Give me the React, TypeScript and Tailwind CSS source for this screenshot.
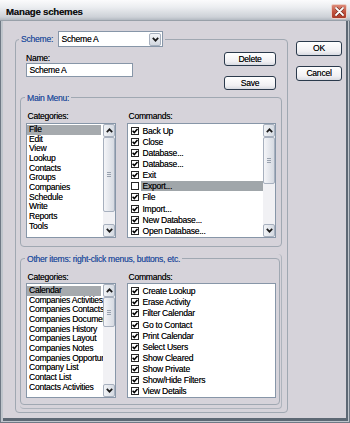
import React from "react";

function Chevron({ up }: { up?: boolean }) {
  return (
    <svg width="7" height="5" viewBox="0 0 7 5">
      <path d={up ? "M0.8 4.2 L3.5 1.3 L6.2 4.2" : "M0.8 0.8 L3.5 3.7 L6.2 0.8"} stroke="#1a1a1a" strokeWidth="1.7" fill="none" />
    </svg>
  );
}

function ArrowBtn({ up, cls }: { up?: boolean; cls: string }) {
  return (
    <div className={`${cls} w-full shrink-0 rounded-[2px] border border-[#a7b0be] bg-[linear-gradient(to_right,#f1f3f6,#d5dae2)] flex items-center justify-center`}>
      <Chevron up={up} />
    </div>
  );
}

function Thumb({ cls }: { cls: string }) {
  return (
    <div className={`${cls} w-full shrink-0 rounded-[2px] border border-[#a7b0be] bg-[linear-gradient(to_right,#f4f5f8,#d6dae2)] flex flex-col items-center justify-center gap-[1px]`}>
      <div className="w-[4px] h-[1px] bg-[#98a1ae]" />
      <div className="w-[4px] h-[1px] bg-[#98a1ae]" />
      <div className="w-[4px] h-[1px] bg-[#98a1ae]" />
    </div>
  );
}

function ScrollBar({ thumbCls }: { thumbCls: string }) {
  return (
    <div className="w-[12px] shrink-0 h-full flex flex-col bg-[#f1f1f4]">
      <ArrowBtn up cls="h-[13px]" />
      <Thumb cls={thumbCls} />
      <div className="flex-1" />
      <ArrowBtn cls="h-[13px]" />
    </div>
  );
}

function Check({ checked }: { checked: boolean }) {
  return (
    <span className="w-[8px] h-[8px] border border-[#262626] bg-white flex items-center justify-center shrink-0">
      {checked && (
        <svg width="6" height="6" viewBox="0 0 6 6">
          <path d="M0.6 2.8 L2.3 4.6 L5.5 0.9" stroke="#000" strokeWidth="1.6" fill="none" />
        </svg>
      )}
    </span>
  );
}

function CatList({ items, selected, ptCls, hCls, thumbCls }: { items: string[]; selected: number; ptCls: string; hCls: string; thumbCls: string }) {
  return (
    <div className={`${hCls} w-[90px] border border-[#8796a8] bg-white flex`}>
      <div className={`${ptCls} flex-1 overflow-hidden pr-[2px]`}>
        {items.map((t, i) => (
          <div key={i} className={`h-[9.66px] leading-[9.66px] pl-[2px] whitespace-nowrap ${i === selected ? "bg-[#a6aaae]" : ""}`}>
            {t}
          </div>
        ))}
      </div>
      <ScrollBar thumbCls={thumbCls} />
    </div>
  );
}

function CmdList({ items, ptCls, hCls, scroll }: { items: [string, boolean, boolean][]; ptCls: string; hCls: string; scroll: boolean }) {
  return (
    <div className={`${hCls} w-[149px] border border-[#8796a8] bg-white flex`}>
      <div className={`${ptCls} flex-1 overflow-hidden`}>
        {items.map(([t, c, hl], i) => (
          <div key={i} className="h-[11.14px] flex items-center pl-[3px]">
            <Check checked={c} />
            <span className={`ml-[1.5px] pl-[2px] flex-1 h-[10px] leading-[10px] whitespace-nowrap ${hl ? "bg-[#a0a6aa]" : ""}`}>{t}</span>
          </div>
        ))}
      </div>
      {scroll && <ScrollBar thumbCls="h-[47px]" />}
    </div>
  );
}

function Btn({ label, cls }: { label: string; cls: string }) {
  return (
    <div className={`${cls} rounded-[3px] border border-[#2b3a4c] bg-[linear-gradient(to_bottom,#ffffff,#f1f0f3_70%,#d9dbe2)] flex items-center justify-center leading-[10px]`}>
      {label}
    </div>
  );
}

const blue = "text-[#2456b6]";

export default function App() {
  const mainCats = ["File", "Edit", "View", "Lookup", "Contacts", "Groups", "Companies", "Schedule", "Write", "Reports", "Tools"];
  const mainCmds: [string, boolean, boolean][] = [
    ["Back Up", true, false],
    ["Close", true, false],
    ["Database...", true, false],
    ["Database...", true, false],
    ["Exit", true, false],
    ["Export...", false, true],
    ["File", true, false],
    ["Import...", true, false],
    ["New Database...", true, false],
    ["Open Database...", true, false],
  ];
  const otherCats = [
    "Calendar",
    "Companies Activities",
    "Companies Contacts",
    "Companies Documents",
    "Companies History",
    "Companies Layout",
    "Companies Notes",
    "Companies Opportunities",
    "Company List",
    "Contact List",
    "Contacts Activities",
  ];
  const otherCmds: [string, boolean, boolean][] = [
    "Create Lookup",
    "Erase Activity",
    "Filter Calendar",
    "Go to Contact",
    "Print Calendar",
    "Select Users",
    "Show Cleared",
    "Show Private",
    "Show/Hide Filters",
    "View Details",
  ].map((t) => [t, true, false]);

  return (
    <div className="w-[350px] h-[423px] flex flex-col bg-[#6f7985] overflow-hidden font-['Liberation_Sans',Arial,sans-serif] text-[8.6px] tracking-[-0.27px] text-black [text-shadow:0_0_0.35px_rgba(0,0,0,0.55)]">
      {/* Title bar */}
      <div className="h-[21px] shrink-0 flex items-start justify-between bg-[linear-gradient(to_bottom,#fbfbfc,#eceef1_35%,#cdd1d7_85%,#b3b9c1)] border-b border-[#98a0a9]">
        <div className="ml-[6px] mt-[6px] text-[9.7px] font-bold leading-[12px] tracking-[-0.25px] text-[#111]">Manage schemes</div>
        <div className="mt-[4px] mr-[3px] w-[16px] h-[15px] rounded-[2px] border border-[#ecd0c8] bg-[linear-gradient(to_bottom,#dc8a78,#c0503c_55%,#a83c2a)] flex items-center justify-center">
          <svg width="9" height="9" viewBox="0 0 9 9">
            <path d="M1 1 L8 8 M8 1 L1 8" stroke="#5a1a10" strokeWidth="3" strokeLinecap="round" />
            <path d="M1 1 L8 8 M8 1 L1 8" stroke="#ffffff" strokeWidth="1.8" strokeLinecap="round" />
          </svg>
        </div>
      </div>

      {/* Frame */}
      <div className="flex-1 flex flex-col pl-[1px] pr-[1px] pb-[1px]">
        <div className="flex-1 flex flex-col pl-[2px] pr-[1px] pb-[1px] bg-[#bfc5cc]">
          <div className="flex-1 flex flex-col pr-[2px] pb-[3px] bg-[#5d6874]">
            <div className="flex-1 flex bg-[#d6d3da]">
              {/* Scheme group */}
              <fieldset className="ml-[12px] mt-[10px] self-start w-[272px] shrink-0 border border-[#a0a8b2] rounded-[4px]">
                <legend className="ml-[3px] px-[2px]">
                  <div className="flex items-center">
                    <span className={`${blue} leading-[10px]`}>Scheme:</span>
                    <div className="ml-[5px] w-[105px] h-[16px] border border-[#8796a8] bg-white flex items-center">
                      <span className="flex-1 pl-[2.5px] leading-[10px]">Scheme A</span>
                      <div className="w-[12px] h-[13px] mr-[1px] rounded-[2px] border border-[#a7b0be] bg-[linear-gradient(to_bottom,#f4f5f8,#d3d8e0)] flex items-center justify-center">
                        <Chevron />
                      </div>
                    </div>
                  </div>
                </legend>
                <div className="pl-[4px] pr-[5px] pb-[3px] flex flex-col">
                  {/* Name row */}
                  <div className="mt-[5px] px-[6px] flex justify-between">
                    <div className="flex flex-col">
                      <span className="mt-[1px] leading-[10px]">Name:</span>
                      <div className="w-[107px] h-[14px] border border-[#8796a8] bg-white flex items-center pl-[2.5px] leading-[10px]">Scheme A</div>
                    </div>
                    <div className="flex flex-col gap-[10px]">
                      <Btn label="Delete" cls="w-[52px] h-[14px]" />
                      <Btn label="Save" cls="w-[52px] h-[14px]" />
                    </div>
                  </div>

                  {/* Main Menu */}
                  <fieldset className="mt-[2.5px] border border-[#a0a8b2] rounded-[4px] pb-[8px]">
                    <legend className={`ml-[4px] px-[2px] leading-[10px] ${blue}`}>Main Menu:</legend>
                    <div className="pl-[5px] pr-[4px] flex gap-[11px]">
                      <div className="flex flex-col">
                        <span className="mt-[8px] ml-[1.5px] leading-[10px]">Categories:</span>
                        <div className="mt-[2px]">
                          <CatList items={mainCats} selected={0} ptCls="pt-[1.5px]" hCls="h-[115px]" thumbCls="h-[75px]" />
                        </div>
                      </div>
                      <div className="flex flex-col">
                        <span className="mt-[8px] ml-[1.5px] leading-[10px]">Commands:</span>
                        <div className="mt-[2px]">
                          <CmdList items={mainCmds} ptCls="pt-[1.6px]" hCls="h-[115px]" scroll />
                        </div>
                      </div>
                    </div>
                  </fieldset>

                  {/* Other items */}
                  <div className="mt-[7.3px] w-[262px] border-r border-b border-[#aeb4bd] rounded-r-[4px] rounded-bl-[4px] pr-[1px] pb-[3px]">
                    <fieldset className="w-[260px] border border-[#a0a8b2] rounded-[4px] pb-[6.7px]">
                      <legend className={`ml-[4px] px-[2px] leading-[10px] ${blue}`}>Other items: right-click menus, buttons, etc.</legend>
                      <div className="pl-[5px] pr-[3px] flex gap-[11px]">
                        <div className="flex flex-col">
                          <span className="mt-[8px] ml-[1.5px] leading-[10px]">Categories:</span>
                          <div className="mt-[1.5px]">
                            <CatList items={otherCats} selected={0} ptCls="pt-[1.7px]" hCls="h-[114.5px]" thumbCls="h-[30px]" />
                          </div>
                        </div>
                        <div className="flex flex-col">
                          <span className="mt-[8px] ml-[1.5px] leading-[10px]">Commands:</span>
                          <div className="mt-[1.5px]">
                            <CmdList items={otherCmds} ptCls="pt-[1.3px]" hCls="h-[114.5px]" scroll={false} />
                          </div>
                        </div>
                      </div>
                    </fieldset>
                  </div>
                </div>
              </fieldset>

              {/* OK / Cancel */}
              <div className="ml-[8px] mt-[19.5px] flex flex-col gap-[10px]">
                <Btn label="OK" cls="w-[46px] h-[15px]" />
                <Btn label="Cancel" cls="w-[46px] h-[15px]" />
              </div>
            </div>
          </div>
        </div>
      </div>
    </div>
  );
}
